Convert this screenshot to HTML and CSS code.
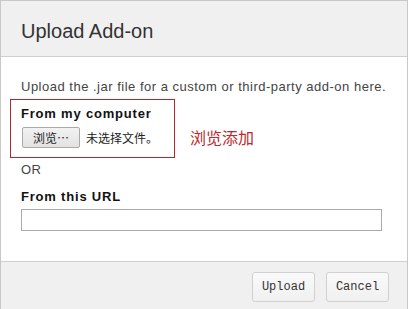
FILE: index.html
```html
<!DOCTYPE html>
<html lang="en">
<head>
    <meta charset="UTF-8">
    <title>Upload Add-on</title>
    <link rel="stylesheet" href="styles.css">
</head>
<body>
    <div class="dialog">
        <div class="dialog-header">
            <h2 class="dialog-title">Upload Add-on</h2>
        </div>
        <div class="dialog-body">
            <p class="intro">Upload the .jar file for a custom or third-party add-on here.</p>
            <div class="local-row">
                <div class="local-box">
                    <span class="field-lbl">From my computer</span>
                    <div class="file-pick">
                        <button class="browse-btn" type="button">浏览…</button>
                        <span class="file-name">未选择文件。</span>
                    </div>
                </div>
                <span class="hint">浏览添加</span>
            </div>
            <p class="or-txt">OR</p>
            <label class="url-field">
                <span class="field-lbl">From this URL</span>
                <input type="text" class="url-input">
            </label>
        </div>
        <div class="dialog-footer">
            <button class="footer-btn" type="button">Upload</button>
            <button class="footer-btn" type="button">Cancel</button>
        </div>
    </div>
</body>
</html>
```

FILE: styles.css
```css
* {
    box-sizing: border-box;
    margin: 0;
}
body {
    background: #fff;
    font-family: 'Liberation Sans', Arial, sans-serif;
    font-size: 13px;
    color: #333;
}
.dialog {
    width: 408px;
    height: 309px;
    border: 1px solid #c8c8c8;
    border-bottom: none;
    display: flex;
    flex-direction: column;
}
.dialog-header {
    height: 56px;
    background: #f0f0f0;
    border-bottom: 1px solid #cfcfcf;
    padding: 19px 20px 0;
}
.dialog-title {
    font-size: 20px;
    font-weight: normal;
    line-height: 23px;
    color: #333;
}
.dialog-body {
    flex: 1;
    padding: 22px 20px 0;
}
.intro {
    line-height: 15px;
    letter-spacing: 0.5px;
    color: #444;
}
.local-row {
    display: flex;
    align-items: flex-start;
    margin: 5px 0 0 -11px;
}
.local-box { /*red frame round the file picker*/
    width: 165px;
    border: 1px solid #b3262b;
    padding: 6px 0 9px 10px;
}
.field-lbl {
    display: block;
    font-weight: bold;
    line-height: 15px;
    letter-spacing: 0.8px;
    color: #111;
}
.file-pick {
    display: flex;
    align-items: center;
    margin-top: 6px;
}
.browse-btn {
    width: 58px;
    height: 21px;
    margin-left: 1px;
    padding: 0;
    border: 1px solid #aaa;
    border-radius: 2px;
    background: linear-gradient(#f2f2f2, #e2e2e2);
    font-family: 'Noto Sans CJK SC', sans-serif;
    font-size: 12px;
    line-height: 19px;
    color: #222;
}
.file-name {
    margin-left: 6px;
    font-family: 'Noto Sans CJK SC', sans-serif;
    font-size: 12px;
    color: #222;
}
.hint {
    margin: 28px 0 0 15px;
    font-family: 'Noto Sans CJK SC', sans-serif;
    font-size: 16px;
    line-height: 20px;
    color: #c0282d;
}
.or-txt {
    margin-top: 4px;
    line-height: 15px;
    letter-spacing: 0.5px;
    color: #444;
}
.url-field {
    display: block;
    margin-top: 12px;
}
.url-input {
    display: block;
    width: 361px;
    height: 22px;
    margin-top: 5px;
    border: 1px solid #aaa;
    outline: none;
}
.dialog-footer {
    height: 48px;
    background: #f0f0f0;
    border-top: 1px solid #cfcfcf;
    padding: 10px 18px 0 0;
    display: flex;
    justify-content: flex-end;
    align-items: flex-start;
    gap: 11px;
}
.footer-btn {
    width: 63px;
    height: 30px;
    padding: 0;
    border: 1px solid #d0d0d0;
    border-radius: 3px;
    background: linear-gradient(#fafafa, #f0f0f0);
    font-family: 'Liberation Mono', monospace;
    font-size: 12px;
    color: #333;
}
```
